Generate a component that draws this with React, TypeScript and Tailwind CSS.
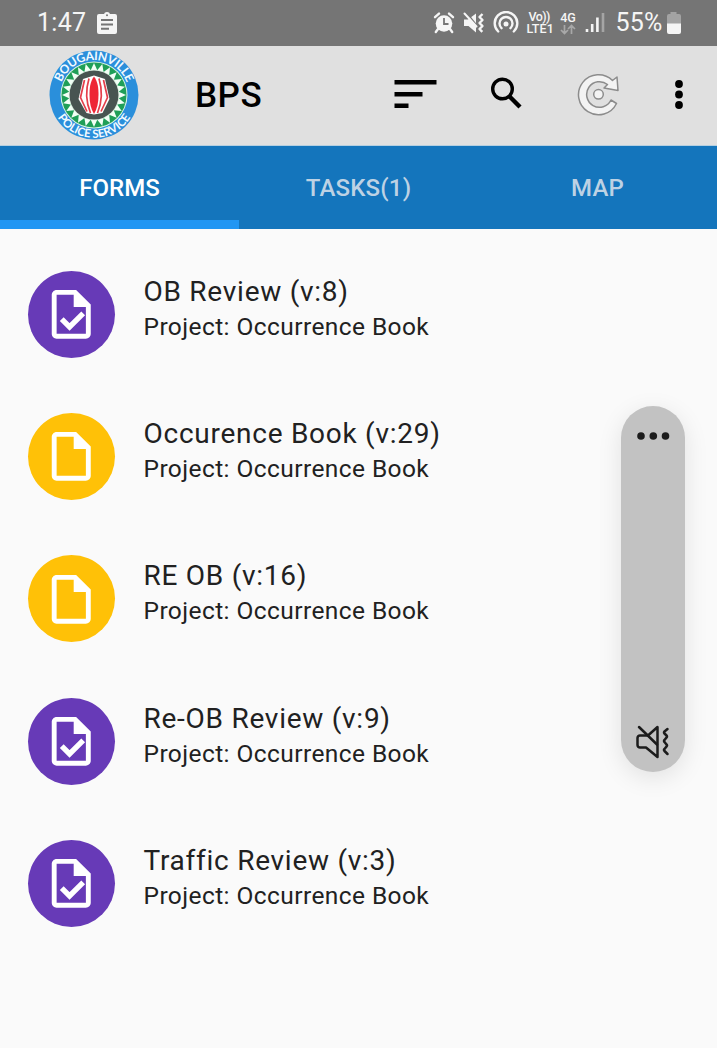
const point = (cx: number, cy: number, r: number, deg: number) => {
  const a = (deg * Math.PI) / 180;
  return `${(cx + r * Math.cos(a)).toFixed(2)} ${(cy + r * Math.sin(a)).toFixed(2)}`;
};

function ClipboardIcon() {
  return (
    <svg className="ml-[10px] h-6 w-[22px]" viewBox="0 0 22 24">
      <rect x="1" y="3" width="20" height="20" rx="2" fill="#f5f5f5" />
      <circle cx="11" cy="4" r="3" fill="#f5f5f5" />
      <circle cx="11" cy="4.2" r="1" fill="#757575" />
      <path d="M5 9h12M5 13.4h12M5 17.8h8" stroke="#757575" strokeWidth="2" />
    </svg>
  );
}

function AlarmIcon() {
  return (
    <svg className="h-6 w-[22px] shrink-0" viewBox="0 0 22 24">
      <circle cx="11" cy="12.5" r="8.3" fill="#f5f5f5" />
      <path d="M2 6.2 6 2.6M20 6.2 16 2.6" stroke="#f5f5f5" strokeWidth="2.4" strokeLinecap="round" />
      <path d="m5 18-2.2 3M17 18l2.2 3" stroke="#f5f5f5" strokeWidth="2.4" strokeLinecap="round" />
      <path d="M11 7v6h4.5" stroke="#757575" strokeWidth="1.8" fill="none" />
    </svg>
  );
}

function MuteIcon() {
  return (
    <svg className="ml-[8px] h-6 w-[22px] shrink-0" viewBox="0 0 22 24">
      <path d="M1 8.5h4L13 2.5v19L5.500 15H1z" fill="#f5f5f5" />
      <path d="M3.500 1.500 15 16" stroke="#757575" strokeWidth="1.500" />
      <path d="m1.500 2.500 12 13" stroke="#f5f5f5" strokeWidth="2" strokeLinecap="round" />
      <path d="m19.500 3-3 3 3 3-3 3 3 3-3 3 2.800 2.800" fill="none" stroke="#f5f5f5" strokeWidth="2.400" strokeLinejoin="round" />
    </svg>
  );
}

function HotspotIcon() {
  return (
    <svg className="ml-[7px] h-6 w-[28px] shrink-0" viewBox="0 0 28 24" fill="none" stroke="#f5f5f5" strokeWidth="2.400" strokeLinecap="round">
      <path d="M6.200 20.500A11.300 11.300 0 1 1 21.800 20.500" />
      <path d="M9.500 17.200A6.500 6.500 0 1 1 18.500 17.200" />
      <circle cx="14" cy="13" r="2.500" fill="#f5f5f5" stroke="none" />
    </svg>
  );
}

function SignalIcon() {
  return (
    <svg className="ml-[9px] h-6 w-[20px] shrink-0" viewBox="0 0 20 24" strokeWidth="2.600">
      <path d="M2 21v-3M7.200 21v-8M12.400 21V6.500" stroke="#f5f5f5" />
      <path d="M18 21V2" stroke="#a5a5a5" />
    </svg>
  );
}

function BatteryIcon() {
  return (
    <svg className="ml-[3px] h-6 w-[16px] shrink-0" viewBox="0 0 16 24">
      <path d="M4.500 1h6v2H13a2 2 0 0 1 2 2v8H1V5a2 2 0 0 1 2-2h1.500z" fill="#a3a3a3" />
      <path d="M1 12.500h14V21a2 2 0 0 1-2 2H3a2 2 0 0 1-2-2z" fill="#f5f5f5" />
    </svg>
  );
}

function StatusBar() {
  return (
    <header className="flex h-[46px] items-center bg-[#757575] pl-[37px] pr-[35.500px] text-[#f5f5f5]">
      <span className="text-[25px] leading-6 tracking-[0.300px]">1:47</span>
      <ClipboardIcon />
      <div className="ml-auto flex items-center">
        <AlarmIcon />
        <MuteIcon />
        <HotspotIcon />
        <div className="ml-[6px] flex w-[27px] flex-col text-[12.500px] font-medium leading-[12px]">
          <span className="pl-[2px] leading-[12px] tracking-[-0.600px]">Vo))</span>
          <span className="leading-[12px] tracking-[0.100px]">LTE1</span>
        </div>
        <div className="ml-[6px] flex w-[17px] flex-col items-center text-[12.500px] font-medium leading-[12px]">
          <span>4G</span>
          <svg className="h-[11px] w-[16px]" viewBox="0 0 16 11" fill="none" stroke="#a8a8a8" strokeWidth="1.700">
            <path d="M4.500 1v8M1 6l3.500 3.500L8 6M11.500 10V2M8 5l3.500-3.500L15 5" />
          </svg>
        </div>
        <SignalIcon />
        <span className="ml-[10px] text-[25px] leading-6 tracking-[0.200px]">55%</span>
        <BatteryIcon />
      </div>
    </header>
  );
}

function Logo() {
  const teeth = Array.from({ length: 24 }, (_, i) => i * 15);
  return (
    <svg className="h-[90px] w-[90px] shrink-0 overflow-visible" viewBox="0 0 90 90">
      <defs>
        <path id="arc-top" d="M10 45a35 35 0 0 1 70 0" />
        <path id="arc-bottom" d="M2.200 45a42.800 42.800 0 0 0 85.600 0" />
      </defs>
      <circle cx="45" cy="45" r="44.500" fill="#2a8fdb" />
      <circle cx="45" cy="45" r="33.500" fill="#d8f5e6" />
      <circle cx="45" cy="45" r="32.500" fill="#1f9f58" />
      {teeth.map((d) => (
        <path
          key={d}
          d={`M${point(45, 45, 25, d - 7.5)}L${point(45, 45, 32, d)}L${point(45, 45, 25, d + 7.5)}Z`}
          fill="#f2fff6"
        />
      ))}
      <circle cx="45" cy="45" r="25.300" fill="#e6f7ea" />
      <circle cx="45" cy="45" r="24.500" fill="#485451" />
      <path d="M34 29 45 25.500 56 29 60.500 49 53.500 63 45 64.500 37.500 63 29.500 49Z" fill="#fff" />
      <path d="M45 26.500C49 32 49.500 38 49.500 45 49.500 53 48 59 45 64 42 59 40.500 53 40.500 45 40.500 38 41 32 45 26.500Z" fill="#ee2635" />
      <path d="M40 28.500C36.500 40 36.500 51 41.500 63M50 28.500C53.500 40 53.500 51 48.500 63M35.500 30 31.500 47.500 38 61.500M54.500 30 58.500 47.500 52 61.500" fill="none" stroke="#e43f4b" strokeWidth="1.700" />
      <g fill="#f2faff" fontFamily="Lato, sans-serif" fontWeight="700" textAnchor="middle">
        <text fontSize="12" letterSpacing="-0.300">
          <textPath href="#arc-top" startOffset="50%">BOUGAINVILLE</textPath>
        </text>
        <text fontSize="11.500" letterSpacing="-0.100">
          <textPath href="#arc-bottom" startOffset="50%">POLICE SERVICE</textPath>
        </text>
      </g>
    </svg>
  );
}

function AppBar() {
  return (
    <div className="flex h-[100px] items-center border-b border-[#b5cfe0] bg-[#e0e0e0] pb-[1px] pl-[49px]">
      <Logo />
      <h1 className="ml-[56px] w-[199px] pt-px text-[35px] font-medium leading-none tracking-[0.500px] text-black">BPS</h1>
      <button aria-label="Sort">
        <svg className="h-[30px] w-[44px]" viewBox="0 0 44 30">
          <path d="M.500 0h42v4.500h-42zM.500 12h28v4.500h-28zM.500 23.500h14V28h-14z" />
        </svg>
      </button>
      <button aria-label="Search" className="ml-[52px]">
        <svg className="h-[36px] w-[34px]" viewBox="0 0 34 36" fill="none" stroke="#000">
          <circle cx="12.500" cy="12" r="9.800" strokeWidth="3.400" />
          <path d="M19.500 19.500 30 30" strokeWidth="4.400" />
        </svg>
      </button>
      <button aria-label="Refresh" className="ml-[53px]">
        <svg className="h-[44px] w-[44px]" viewBox="0 0 44 44" fill="#f3f3f3" stroke="#8c8c8c" strokeWidth="1.500" strokeLinejoin="round">
          <path d="M35.500 7.500 40 4l1 13.500-14-2.500 3.500-3.500A12.800 12.800 0 1 0 34 27l5.500 3.500A20 20 0 1 1 35.500 7.500Z" />
          <circle cx="21.500" cy="21.300" r="4.800" />
        </svg>
      </button>
      <button aria-label="More options" className="ml-[53px]">
        <svg className="h-[30px] w-[10px]" viewBox="0 0 10 30">
          <circle cx="5" cy="4" r="3.900" />
          <circle cx="5" cy="14.500" r="3.900" />
          <circle cx="5" cy="25" r="3.900" />
        </svg>
      </button>
    </div>
  );
}

function Tabs() {
  return (
    <nav className="grid h-[83px] grid-cols-3 bg-[#1475bc] text-[24px] font-medium text-[#bdd2e4]">
      <button className="border-b-[9px] border-[#2196f3] pt-[9px] text-white">FORMS</button>
      <button className="tracking-[0.200px]">TASKS(1)</button>
      <button className="tracking-[0.200px]">MAP</button>
    </nav>
  );
}

type Form = { title: string; review: boolean };

const forms: Form[] = [
  { title: "OB Review (v:8)", review: true },
  { title: "Occurence Book (v:29)", review: false },
  { title: "RE OB (v:16)", review: false },
  { title: "Re-OB Review (v:9)", review: true },
  { title: "Traffic Review (v:3)", review: true },
];

function FormRow({ title, review }: Form) {
  return (
    <li className="flex h-[142.250px] items-center pl-[28px]">
      <div className={`flex size-[87px] shrink-0 items-center justify-center rounded-full ${review ? "bg-[#673ab7]" : "bg-[#ffc107]"}`}>
        <svg className="size-[58.500px]" viewBox="0 0 24 24" fill="#fff">
          <path d="M6 2c-1.100 0-2 .900-2 2v16c0 1.100.900 2 2 2h12c1.100 0 2-.900 2-2V8l-6-6H6zm0 2h7v5h5v11H6V4z" />
          {review && <path d="m8.100 14 3.200 3.200 5.600-5.600" fill="none" stroke="#fff" strokeWidth="2.200" />}
        </svg>
      </div>
      <div className="mb-[13px] ml-[28.500px] text-[#212121]">
        <h2 className="text-[28px] leading-[38px] tracking-[0.740px]">{title}</h2>
        <p className="text-[24.500px] leading-[32px] tracking-[0.420px]">Project: Occurrence Book</p>
      </div>
    </li>
  );
}

function VolumePanel() {
  return (
    <aside className="absolute left-[621px] top-[406px] flex h-[366px] w-[64px] flex-col items-center justify-between rounded-full bg-[#c2c2c2] pb-[12px] pt-[25px] shadow-[0_6px_24px_rgba(0,0,0,0.1)]">
      <svg className="h-[10px] w-[34px]" viewBox="0 0 34 10" fill="#1c1c1c">
        <circle cx="5" cy="5" r="3.800" />
        <circle cx="17.300" cy="5" r="3.800" />
        <circle cx="29.500" cy="5" r="3.800" />
      </svg>
      <svg className="h-[36px] w-[36px]" viewBox="0 0 36 36" fill="none" stroke="#1c1c1c" strokeWidth="2.500" strokeLinecap="round" strokeLinejoin="round">
        <path d="M13 11.500 22.500 3v30L11 23.500H5a2.500 2.500 0 0 1-2.500-2.500V14a2.500 2.500 0 0 1 2.500-2.500H13" />
        <path d="M4 3 22 20.500" />
        <path d="m32.500 5-3 2.500q-1 1 0 2l2 2q1 1 0 2l-2 2.500q-1 1 0 2l2 2.500q1 1 0 2l-2 2.500q-1 1 0 2l3 3" />
      </svg>
    </aside>
  );
}

export default function App() {
  return (
    <div className="relative h-[1048px] w-[717px] overflow-hidden bg-[#fafafa] font-[Roboto,sans-serif]">
      <StatusBar />
      <AppBar />
      <Tabs />
      <ul className="pt-[14.250px]">
        {forms.map((form) => (
          <FormRow key={form.title} {...form} />
        ))}
      </ul>
      <VolumePanel />
    </div>
  );
}
